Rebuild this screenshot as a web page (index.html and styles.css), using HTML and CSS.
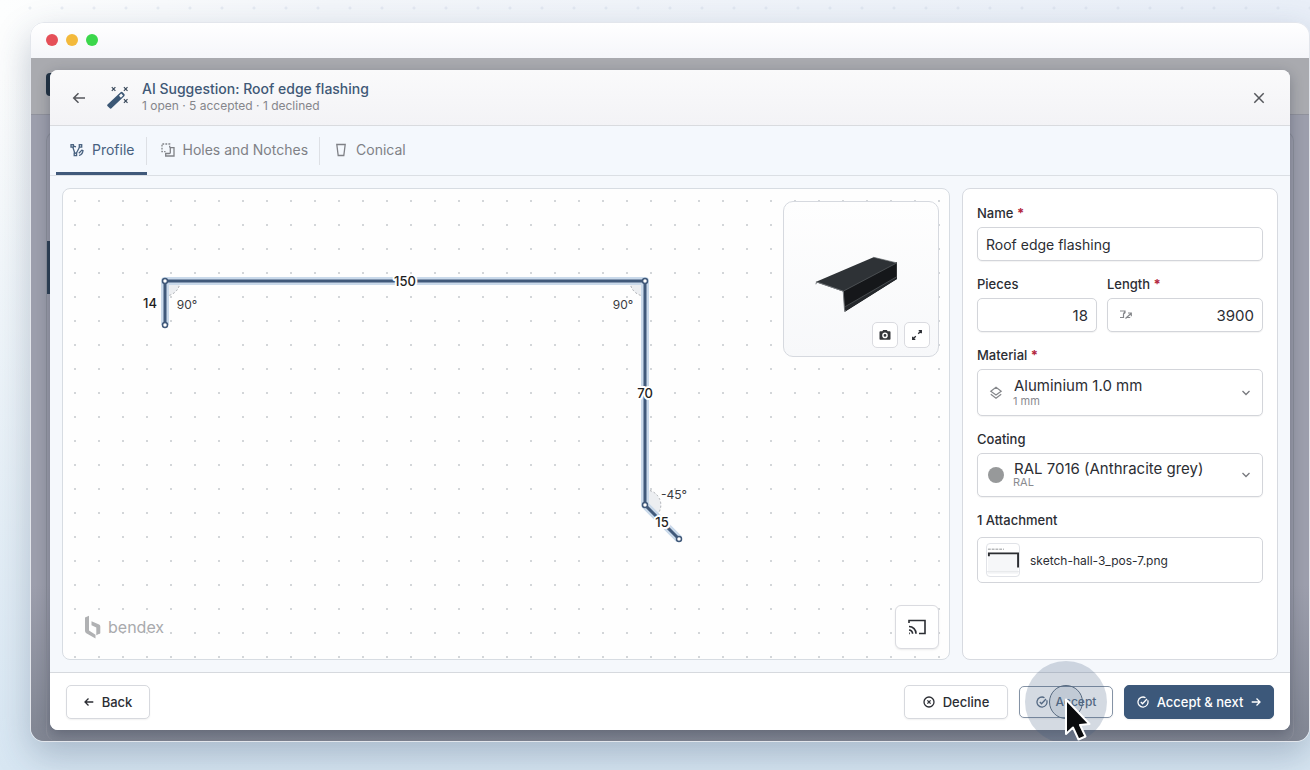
FILE: index.html
```html
<!DOCTYPE html>
<html lang="en">
<head>
<meta charset="utf-8">
<meta name="viewport" content="width=device-width, initial-scale=1">
<title>AI Suggestion: Roof edge flashing</title>
<link rel="stylesheet" href="styles.css">
</head>
<body>
<div class="window">
  <div class="titlebar">
    <span class="light light-close"></span>
    <span class="light light-min"></span>
    <span class="light light-max"></span>
  </div>
  <div class="stage">
    <div class="app" aria-hidden="true">
      <div class="app-head"><span class="app-logo"></span></div>
      <div class="app-body"><div class="app-card"><span class="app-mark"></span></div></div>
    </div>

    <main class="modal" role="dialog" aria-labelledby="title">
      <header class="modal-head">
        <button class="icon-btn" type="button" aria-label="Go back">
          <svg width="14" height="14" viewBox="0 0 14 14" class="line"><path d="M13 7H1.800M6.500 2.200L1.700 7l4.800 4.800"/></svg>
        </button>
        <svg class="wand" width="24" height="24" viewBox="0 0 24 24">
          <path fill-rule="evenodd" d="M1.500 18.600L14.600 6.300a1.600 1.600 0 0 1 2.200.1l1.500 1.600a1.600 1.600 0 0 1-.1 2.200L5.200 22.400a1 1 0 0 1-1.400-.1L1.400 20a1 1 0 0 1 .1-1.400zM13 9.700l1.900 2 2.200-2.100-1.900-2z"/>
          <path class="sparks" d="M5.800 1.200l3.600 3.600M9.400 1.200L5.800 4.800M17.900 1.200l3.600 3.600M21.500 1.200l-3.600 3.600M17.900 13.200l3.600 3.600M21.500 13.200l-3.600 3.600"/>
        </svg>
        <div class="heading">
          <h1 id="title">AI Suggestion: Roof edge flashing</h1>
          <p>1 open · 5 accepted · 1 declined</p>
        </div>
        <button class="icon-btn" type="button" aria-label="Close">
          <svg width="14" height="14" viewBox="0 0 14 14" class="line"><path d="M2.300 2.300l9.400 9.400M11.700 2.300l-9.400 9.400"/></svg>
        </button>
      </header>

      <nav class="tabs" role="tablist">
        <button class="tab active" type="button" role="tab" aria-selected="true">
          <svg width="14" height="14" viewBox="0 0 14 14" class="line">
            <path d="M2.800 4l2 6.300M6.300 10.200L9.500 4.200M3.600 3.200l2.400.6M9 12.500c2.500-.8 4-2.600 4-5.500M8.800 10.200l3.600-3.600"/>
            <rect x="1" y="1.700" width="2.400" height="2.400"/><rect x="9.300" y="1.700" width="2.400" height="2.400"/><rect x="4.200" y="10.200" width="2.400" height="2.400"/>
          </svg>
          Profile
        </button>
        <button class="tab" type="button" role="tab">
          <svg width="14" height="14" viewBox="0 0 14 14" class="line">
            <path stroke-dasharray="1.800 1.200" d="M8.700 4.500V1H1v7.700h3.500"/>
            <path d="M10.500 4.700H13V13H4.700v-2.500h3.600a1 1 0 0 0 1-1V4.700z"/>
          </svg>
          Holes and Notches
        </button>
        <button class="tab" type="button" role="tab">
          <svg width="14" height="14" viewBox="0 0 14 14" class="line"><path d="M2.800 1.500h8.400L9.800 12.500H4.200z"/></svg>
          Conical
        </button>
      </nav>

      <div class="modal-body">
        <section class="canvas" aria-label="Profile drawing">
          <svg class="drawing" width="100%" height="100%">
            <g class="angles">
              <path d="M102 92h15a15 15 0 0 1-15 15z"/>
              <path d="M582 92h-15a15 15 0 0 0 15 15z"/>
              <path d="M582 316v-15a15 15 0 0 1 11 26z"/>
            </g>
            <path class="halo" d="M102 136V92H582V316L616 350"/>
            <path class="profile" d="M102 136V92H582V316L616 350"/>
            <g class="nodes">
              <circle cx="102" cy="136" r="2.500"/><circle cx="102" cy="92" r="2.500"/><circle cx="582" cy="92" r="2.500"/>
              <circle cx="582" cy="316" r="2.500"/><circle cx="616" cy="350" r="2.500"/>
            </g>
            <g class="lengths">
              <text x="87" y="119">14</text>
              <text x="342" y="97">150</text>
              <text x="582" y="209">70</text>
              <text x="599" y="338">15</text>
            </g>
            <g class="degrees">
              <text x="124" y="120">90°</text>
              <text x="560" y="120">90°</text>
              <text x="611" y="310">-45°</text>
            </g>
          </svg>

          <div class="preview">
            <svg class="model" viewBox="0 0 468 468" aria-label="3D preview">
              <path fill="#15171a" d="M180 270L343 182v52L184 334z"/>
              <path fill="#2e3236" d="M96 243L272 168l71 17-163 87z"/>
              <path fill="#25282c" d="M184 320l159-94v8L186 332z"/>
              <path fill="none" stroke="#74787c" stroke-width="3" d="M97 250l2-7 81 28 4 58 4 2"/>
              <path fill="none" stroke="#5a5e62" stroke-width="2" d="M180 271l163-86M186 318l157-91M272 168l71 17"/>
            </svg>
            <div class="preview-actions">
              <button class="tool" type="button" aria-label="Take picture">
                <svg width="12" height="12" viewBox="0 0 12 12" fill="#34363a"><path fill-rule="evenodd" d="M4.200 1h3.600l.9 1.200h1.800c.6 0 1 .4 1 1v6.600c0 .6-.4 1-1 1h-9c-.6 0-1-.4-1-1V3.200c0-.6.4-1 1-1h1.800zM6 3.600a2.800 2.800 0 1 0 0 5.600 2.800 2.800 0 0 0 0-5.600zM6 5a1.400 1.400 0 1 1 0 2.800A1.400 1.400 0 0 1 6 5z"/></svg>
              </button>
              <button class="tool" type="button" aria-label="Expand">
                <svg width="12" height="12" viewBox="0 0 12 12" class="line"><path d="M7.200 4.800L10.300 1.700M7.700 1.700h2.600v2.600M4.800 7.200L1.700 10.300M1.700 7.700v2.600h2.600"/></svg>
              </button>
            </div>
          </div>

          <div class="canvas-foot">
            <div class="brand">
              <svg width="16" height="24" viewBox="0 0 16 24" fill="#b0b1b3"><path d="M0 2.500L4 .8v14.600l6.500 4.400v3.600L1.300 18.300A3 3 0 0 1 0 16z"/><path d="M6.500 6.200l7.600 3.400c.8.400 1.200 1 1.200 1.800v6.800l-4 2v-7.700l-4.800-2.200z"/></svg>
              <span>bendex</span>
            </div>
            <button class="cast" type="button" aria-label="Cast">
              <svg width="18" height="16" viewBox="0 0 18 16" class="line"><path d="M1 4V1.500h16v13h-6"/><path d="M1 14.400h.8M1 11a3.700 3.700 0 0 1 3.600 3.800M1 7.500a7 7 0 0 1 7 7.300"/></svg>
            </button>
          </div>
        </section>

        <form class="side">
          <div class="field">
            <label for="name">Name <b>*</b></label>
            <input class="control" id="name" type="text" value="Roof edge flashing">
          </div>
          <div class="row">
            <div class="field">
              <label for="pieces">Pieces</label>
              <input class="control num" id="pieces" type="text" inputmode="numeric" value="18">
            </div>
            <div class="field">
              <label for="length">Length <b>*</b></label>
              <div class="stack">
                <input class="control num" id="length" type="text" inputmode="numeric" value="3900">
                <svg class="lead" width="14" height="12" viewBox="0 0 14 12" class="line"><path d="M1 2h5v1.700L4.500 5v3.500H1M6 2.500L4.500 4.500M6.500 9.500l5.500-5M9 4h3.300v3.200M8.500 8.500h2.700"/></svg>
              </div>
            </div>
          </div>
          <div class="field">
            <label for="material">Material <b>*</b></label>
            <div class="stack">
              <select class="control pick tall" id="material"><option>Aluminium 1.0 mm</option></select>
              <svg class="lead" width="14" height="14" viewBox="0 0 14 14"><path d="M7 1.300l5.200 3.900L7 9.100 1.800 5.200zM1.800 8.200L7 12.200l5.200-4"/></svg>
              <small>1 mm</small>
              <svg class="chevron" width="10" height="10" viewBox="0 0 10 10"><path d="M1.500 3L5 6.500 8.500 3"/></svg>
            </div>
          </div>
          <div class="field">
            <label for="coating">Coating</label>
            <div class="stack">
              <select class="control pick" id="coating"><option>RAL 7016 (Anthracite grey)</option></select>
              <span class="swatch"></span>
              <small>RAL</small>
              <svg class="chevron" width="10" height="10" viewBox="0 0 10 10"><path d="M1.500 3L5 6.500 8.500 3"/></svg>
            </div>
          </div>
          <div class="field wide-gap">
            <span class="caption">1 Attachment</span>
            <div class="attachment">
              <svg class="thumb" width="34" height="34" viewBox="0 0 34 34"><path fill="#f6f7f9" d="M1 9h32v23H1z"/><path stroke="#8b8d90" d="M1 5.500h17" stroke-dasharray="3 1"/><path stroke="#2b2d31" stroke-width="2" fill="none" d="M2 13v-3h31v15"/><path stroke="#e3e4e8" d="M0 29.500h34"/></svg>
              <span>sketch-hall-3_pos-7.png</span>
            </div>
          </div>
        </form>
      </div>

      <footer class="modal-foot">
        <button class="btn back" type="button">
          <svg width="10" height="10" viewBox="0 0 10 10" class="line"><path d="M9.300 5H1M4.500 1.500L1 5l3.500 3.500"/></svg>
          Back
        </button>
        <button class="btn decline" type="button">
          <svg width="12" height="12" viewBox="0 0 12 12" class="line"><circle cx="6" cy="6" r="5"/><path d="M4.400 4.400l3.200 3.200M7.600 4.400L4.400 7.600"/></svg>
          Decline
        </button>
        <div class="pressed">
          <button class="btn accept" type="button">
            <svg width="12" height="12" viewBox="0 0 12 12" class="line"><path d="M10.700 4.300A5 5 0 1 1 8.500 1.700M3.800 6l1.700 1.700 4.500-4.700"/></svg>
            Accept
          </button>
          <svg class="pointer" width="84" height="84" viewBox="0 0 84 84" aria-hidden="true">
            <circle cx="42" cy="42" r="41" fill="#3c587a" fill-opacity=".22"/>
            <circle cx="42" cy="42" r="16.500" fill="#3c587a" fill-opacity=".12" stroke="#56697f"/>
            <path fill="#0b0c0e" stroke="#fff" stroke-width="2" stroke-linejoin="round" d="M42 39.500V74l7-6.500 5.500 12 7-3-5.500-11.500 9.500-1z"/>
          </svg>
        </div>
        <button class="btn primary" type="button">
          <svg width="12" height="12" viewBox="0 0 12 12" class="line"><path d="M10.700 4.300A5 5 0 1 1 8.500 1.700M3.800 6l1.700 1.700 4.500-4.700"/></svg>
          Accept &amp; next
          <svg width="10" height="10" viewBox="0 0 10 10" class="line"><path d="M.7 5H9M5.500 1.500L9 5 5.500 8.500"/></svg>
        </button>
      </footer>
    </main>
  </div>
</div>
</body>
</html>
```
FILE: styles.css
```css
* { box-sizing: border-box; }

body {
  margin: 0;
  min-height: 100vh;
  padding: 22px 0 28px 30px;
  display: flex;
  font-family: Inter, "Liberation Sans", sans-serif;
  font-size: 13px;
  color: #2b2d33;
  overflow: hidden;
  background:
    radial-gradient(circle, rgba(200, 210, 225, 0.35) 0 1px, transparent 2px) 14px -8px / 32px 32px repeat-x,
    linear-gradient(to bottom, rgba(214, 229, 243, 0) 10%, #d8e7f3 100%),
    linear-gradient(to right, #fdfefe, #f3f6fa 25%, #e9eff8);
}

button, input, select { font: inherit; color: inherit; }
button { cursor: pointer; }

.line {
  fill: none;
  stroke: currentColor;
  stroke-width: 1.3;
}

.window {
  flex: 1;
  display: flex;
  flex-direction: column;
  border: 1px solid #e3e6ec;
  border-radius: 14px;
  overflow: hidden;
  box-shadow: 0 14px 36px rgba(40, 60, 95, 0.28);
}

.titlebar {
  display: flex;
  align-items: center;
  gap: 8px;
  height: 35px;
  padding: 0 0 1px 15px;
  background: linear-gradient(#ffffff, #f5f6fa);
}
.light { width: 12px; height: 12px; border-radius: 50%; }
.light-close { background: #e54f58; }
.light-min { background: #f3b93b; }
.light-max { background: #3bd74b; }

.stage {
  flex: 1;
  display: grid;
  grid-template: minmax(0, 1fr) / minmax(0, 1fr);
  background: #9d9fad;
}
.app, .modal { grid-area: 1 / 1; }
.app { display: flex; flex-direction: column; }
.app-head {
  height: 57px;
  padding: 15px 15px;
  background: #a9aaaf;
  border-bottom: 1px solid #90929c;
}
.app-logo {
  display: block;
  width: 40px;
  height: 23px;
  border-radius: 4px;
  background: #223344;
}
.app-body { flex: 1; padding: 16px 15px 0; background: linear-gradient(#9c9eac 75%, #808592); }
.app-card {
  height: 100%;
  padding-top: 109px;
  border: 1px solid #8d909c;
  border-bottom: 0;
  border-radius: 10px;
}
.app-mark { display: block; width: 20px; height: 53px; background: #2f4257; }

.modal {
  margin: 12px 19px 11px;
  display: flex;
  flex-direction: column;
  background: #f5f8fc;
  border-radius: 8px;
  box-shadow: 0 4px 14px rgba(20, 28, 48, 0.3);
}

.modal-head {
  display: flex;
  align-items: center;
  height: 56px;
  padding: 0 20px 0 18px;
  border-bottom: 1px solid #d9dbdf;
  border-radius: 8px 8px 0 0;
  background: linear-gradient(#fafafb, #f3f3f6);
}
.icon-btn {
  display: grid;
  place-items: center;
  width: 22px;
  height: 22px;
  padding: 0;
  border: 0;
  background: none;
  color: #55575c;
}
.icon-btn svg { stroke-width: 1.5; }
.wand { margin-left: 16px; fill: #3b5775; }
.sparks { stroke: #3b4a5c; stroke-width: 1.2; }
.heading { flex: 1; margin-left: 12px; }
.heading h1 {
  margin: 0;
  font-size: 14px;
  line-height: 16px;
  font-weight: 450;
  color: #3f5876;
}
.heading p { margin: 0; font-size: 12px; line-height: 17px; color: #85868b; }

.tabs {
  display: flex;
  height: 50px;
  padding-left: 6px;
  border-bottom: 1px solid #dbdfe4;
  background: #f4f8fd;
}
.tab {
  display: flex;
  align-items: center;
  gap: 8px;
  padding: 1px 12px 0 14px;
  border: 0;
  border-bottom: 3px solid transparent;
  background: linear-gradient(#dde0e5, #dde0e5) 100% 60% / 1px 28px no-repeat;
  font-size: 14px;
  color: #7f8186;
}
.tab.active { border-bottom-color: #40597a; color: #47617f; }
.tab:last-child { background: none; }

.modal-body {
  flex: 1;
  min-height: 0;
  display: grid;
  grid-template-columns: minmax(0, 1fr) 316px;
  gap: 12px;
  padding: 12px;
}

.canvas {
  position: relative;
  display: flex;
  flex-direction: column;
  justify-content: space-between;
  align-items: flex-end;
  padding: 12px 10px 10px;
  border: 1px solid #d7dce2;
  border-radius: 8px;
  background: radial-gradient(circle, #d3d6d9 0 1px, transparent 1px) 0 0 / 24px 24px #fefefe;
}
.drawing { position: absolute; inset: 0; }
.halo { fill: none; stroke: #c9d9ea; stroke-width: 8; stroke-linejoin: round; }
.profile { fill: none; stroke: #40597a; stroke-width: 3; }
.nodes { fill: #fff; stroke: #40597a; stroke-width: 1.5; }
.angles { fill: #eceef1; stroke: #a9acb1; stroke-dasharray: 2 2; }
.lengths {
  fill: #1d1e21;
  font-size: 13px;
  font-weight: 450;
  text-anchor: middle;
  stroke: #fff;
  stroke-width: 4;
  stroke-linejoin: round;
  paint-order: stroke;
}
.degrees { fill: #3a3b3f; font-size: 12px; text-anchor: middle; }

.preview {
  position: relative;
  width: 156px;
  height: 156px;
  border: 1px solid #d6d9df;
  border-radius: 10px;
  background: linear-gradient(#fefefe, #f7f8fa);
}
.model { width: 100%; height: 100%; display: block; }
.preview-actions {
  position: absolute;
  right: 8px;
  bottom: 8px;
  display: flex;
  gap: 6px;
}
.tool, .cast {
  display: grid;
  place-items: center;
  padding: 0;
  border: 1px solid #dadbe0;
  border-radius: 5px;
  background: #fff;
}
.tool { width: 26px; height: 26px; }

.canvas-foot {
  position: relative;
  align-self: stretch;
  display: flex;
  align-items: center;
  justify-content: space-between;
  padding-left: 12px;
}
.brand { display: flex; align-items: center; gap: 7px; font-size: 16px; color: #a9aaad; }
.cast { width: 44px; height: 44px; border-radius: 6px; box-shadow: 0 1px 2px rgba(0, 0, 0, 0.08); }
.cast svg { stroke-width: 1.6; }

.side {
  display: flex;
  flex-direction: column;
  gap: 14px;
  padding: 15px 14px;
  border: 1px solid #d7dae0;
  border-radius: 8px;
  background: #fff;
}
.row { display: grid; grid-template-columns: 120fr 156fr; gap: 10px; }
.field { display: flex; flex-direction: column; gap: 5px; min-width: 0; }
.field.wide-gap { gap: 8px; }
.field label, .caption { font-size: 13px; line-height: 18px; font-weight: 450; }
.field label b { color: #b3263e; }
.control {
  width: 100%;
  height: 34px;
  padding: 0 8px;
  border: 1px solid #d3d5da;
  border-radius: 5px;
  background: #fff;
  font-size: 14px;
  box-shadow: 0 1px 1px rgba(0, 0, 0, 0.05);
}
.num { text-align: right; font-size: 15px; }
.stack { display: grid; align-items: center; }
.stack > * { grid-area: 1 / 1; }
.lead { margin-left: 12px; fill: none; stroke: #85878b; stroke-width: 1.2; pointer-events: none; }
.pick {
  appearance: none;
  height: 44px;
  padding: 0 32px 14px 36px;
  font-size: 15px;
}
.pick.tall { height: 47px; }
.stack small {
  align-self: end;
  margin: 0 0 8px 36px;
  font-size: 11px;
  line-height: 14px;
  color: #8a8b90;
  pointer-events: none;
}
.chevron {
  justify-self: end;
  margin-right: 12px;
  fill: none;
  stroke: #77797e;
  stroke-width: 1.3;
  pointer-events: none;
}
.swatch { width: 16px; height: 16px; margin-left: 11px; border-radius: 50%; background: #97999a; pointer-events: none; }
.attachment {
  display: flex;
  align-items: center;
  gap: 10px;
  height: 46px;
  padding: 0 8px;
  border: 1px solid #d3d5da;
  border-radius: 5px;
  font-size: 12px;
}
.thumb { border: 1px solid #e1e3e8; border-radius: 4px; }

.modal-foot {
  display: flex;
  align-items: center;
  gap: 11px;
  height: 58px;
  padding: 0 16px;
  border-top: 1px solid #d6d9de;
  border-radius: 0 0 8px 8px;
  background: #fff;
}
.btn {
  display: flex;
  align-items: center;
  justify-content: center;
  gap: 8px;
  height: 34px;
  padding: 0;
  border: 1px solid #d7d9de;
  border-radius: 5px;
  background: #fff;
  font-size: 13px;
  font-weight: 450;
  box-shadow: 0 1px 2px rgba(0, 0, 0, 0.06);
}
.back { width: 84px; margin-right: auto; }
.decline { width: 104px; }
.accept { width: 94px; height: 32px; border-color: #8593a5; font-size: 12px; color: #5b6e85; }
.primary { width: 150px; border-color: #3c587a; background: #3c587a; color: #fff; font-weight: 500; }
.pressed { position: relative; }
.pointer {
  position: absolute;
  top: 50%;
  left: 50%;
  margin: -42px 0 0 -42px;
  pointer-events: none;
}
```
